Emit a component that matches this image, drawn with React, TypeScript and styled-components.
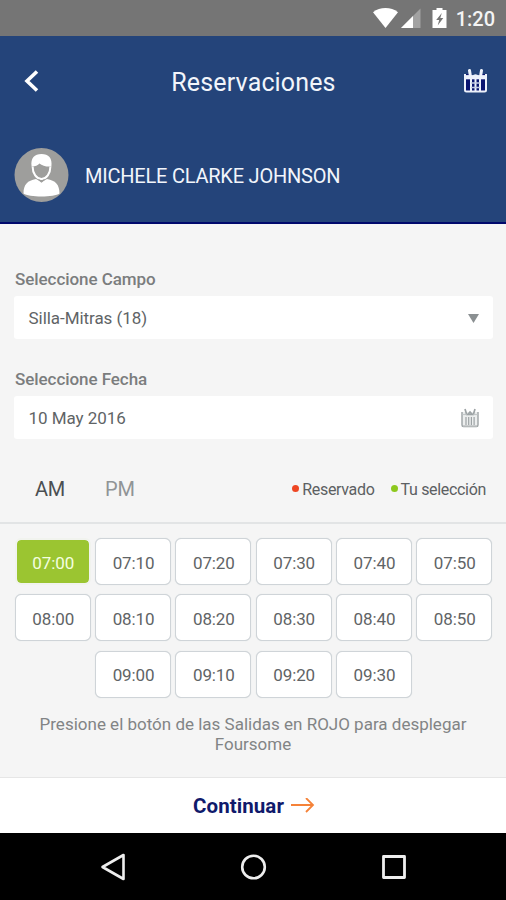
import React from "react";
import styled, { createGlobalStyle } from "styled-components";

const GlobalStyle = createGlobalStyle`
  * { box-sizing: border-box; }
  body { margin: 0; background: #f5f5f5; }
  svg { display: block; flex: none; }
  button { font: inherit; color: inherit; border: 0; background: none; padding: 0; margin: 0; }
`;

const Screen = styled.div`
  width: 506px;
  height: 900px;
  display: flex;
  flex-direction: column;
  overflow: hidden;
  background: #f5f5f5;
  color: #5c6062;
  font-family: Roboto, "Liberation Sans", sans-serif;
  font-size: 17px;
`;

const StatusBar = styled.div`
  height: 36px;
  flex: none;
  display: flex;
  align-items: center;
  justify-content: flex-end;
  padding-right: 11px;
  background: #757575;
  color: #f4f4f4;
`;

const Clock = styled.span`
  margin-left: 8px;
  font-size: 20px;
  font-weight: 500;
  line-height: 36px;
  padding-top: 2px;
`;

const Header = styled.header`
  height: 188px;
  flex: none;
  background: #24447a;
  border-bottom: 2px solid #00086c;
  color: #f2f5fb;
`;

const TitleBar = styled.div`
  height: 90px;
  display: grid;
  grid-template-columns: 60px 1fr 60px;
  align-items: center;
  padding: 0 18px 0 23px;
`;

const Title = styled.h1`
  margin: 2px 0 0;
  font-size: 25px;
  font-weight: 400;
  letter-spacing: 0.15px;
  text-align: center;
  padding-right: 4px;
`;

const IconButton = styled.button<{ $end?: boolean }>`
  display: flex;
  justify-content: ${(p) => (p.$end ? "flex-end" : "flex-start")};
`;

const Profile = styled.div`
  height: 98px;
  display: flex;
  align-items: center;
  gap: 16px;
  padding: 0 14px;
`;

const ProfileName = styled.span`
  font-size: 20px;
  letter-spacing: -0.22px;
  padding-top: 2px;
`;

const Form = styled.section`
  height: 215px;
  flex: none;
  padding: 43px 13px 0 14px;
`;

const Field = styled.div`
  height: 100px;
`;

const FieldLabel = styled.div`
  height: 29px;
  line-height: 24px;
  padding-left: 1px;
  font-size: 17px;
  font-weight: 500;
  letter-spacing: -0.06px;
  color: #7b7d7e;
`;

const FieldBox = styled.div`
  height: 43px;
  display: flex;
  align-items: center;
  justify-content: space-between;
  padding: 1px 14px 0 14.5px;
  border-radius: 3px;
  background: #fff;
  letter-spacing: -0.05px;
  color: #5f6466;
`;

const Periods = styled.div`
  height: 85px;
  flex: none;
  display: flex;
  align-items: center;
  border-bottom: 2px solid #e2e4e5;
  padding: 16px 20px 0 35px;
`;

const Period = styled.button<{ $active?: boolean }>`
  width: 70px;
  text-align: left;
  font-size: 20px;
  letter-spacing: -0.2px;
  color: ${(p) => (p.$active ? "#4b4f52" : "#909496")};
`;

const Legend = styled.div`
  margin-left: auto;
  display: flex;
  gap: 16px;
  font-size: 16px;
`;

const LegendItem = styled.span<{ $color: string }>`
  display: flex;
  align-items: center;
  gap: 3px;
  letter-spacing: -0.32px;
  padding-top: 1px;
  &::before {
    content: "";
    width: 7px;
    height: 7px;
    margin-bottom: 2px;
    border-radius: 50%;
    background: ${(p) => p.$color};
  }
`;

const Slots = styled.div`
  height: 160px;
  margin-top: 14px;
  flex: none;
  display: flex;
  flex-wrap: wrap;
  align-content: flex-start;
  justify-content: center;
  gap: 9.3px 4.3px;
  padding: 0 9px 0 10px;
`;

const Slot = styled.button<{ $selected?: boolean }>`
  width: 76px;
  height: 47px;
  border-radius: 6px;
  border: ${(p) => (p.$selected ? "2px solid #f1f3ee" : "1.5px solid #cfd4d8")};
  box-shadow: 0 0 1px ${(p) => (p.$selected ? "transparent" : "#d5dadd")};
  background: ${(p) => (p.$selected ? "#9bc531" : "#fff")};
  background-clip: padding-box;
  color: ${(p) => (p.$selected ? "#f4ffe0" : "#5f6466")};
  font-size: 17px;
  letter-spacing: -0.1px;
  padding: 2px 0 0 1px;
`;

const Hint = styled.p`
  margin: 0;
  height: 79px;
  flex: none;
  padding: 16px 30px 0;
  text-align: center;
  font-size: 17px;
  line-height: 20px;
  color: #828485;
`;

const Continue = styled.button`
  height: 56px;
  flex: none;
  display: flex;
  align-items: center;
  justify-content: center;
  gap: 7px;
  background: #fff;
  border-top: 1px solid #e6e6e6;
  color: #101a6b;
  font-size: 20.5px;
  font-weight: 700;
  letter-spacing: 0.08px;
  padding-left: 2px;
`;

const NavBar = styled.nav`
  flex: 1;
  display: flex;
  align-items: center;
  justify-content: space-between;
  padding: 1px 97px 0 99px;
  background: #000;
`;

const CalendarIcon = () => (
  <svg width="25" height="25" viewBox="0 0 25 25" fill="none" stroke="#eef2fb">
    <path d="M2 5v16q0 1.500 1.500 1.500h18q1.500 0 1.500-1.500V5" fill="#0a1470" strokeWidth="2" />
    <path d="M9 2.500h7v4h-7z" fill="#24447a" stroke="none" />
    <path d="M2.500 8.200h20" strokeWidth="4.200" />
    <path d="M9 7.500q3.500-4.500 7 0z" fill="#eef2fb" stroke="none" />
    <path d="M6.500 1.500l1 6M18.500 1.500l-1 6" strokeWidth="3" strokeLinecap="round" />
    <path d="M8 10v12.500M12.500 10v12.500M17 10v12.500" strokeWidth="2" />
    <path d="M8 14h9M8 18.500h9" strokeWidth="1.600" stroke="#c3cbe4" />
  </svg>
);

const FieldCalendarIcon = () => (
  <svg width="18" height="20" viewBox="0 0 18 20" fill="none" stroke="#9da3a5">
    <path d="M1 4v13q0 1.500 1.500 1.500h13q1.500 0 1.500-1.500V4" fill="#eceeee" strokeWidth="1.400" />
    <path d="M1.500 6.500h15" strokeWidth="1.200" stroke="#c3c7c8" />
    <path d="M4 1l1.500 5M14 1l-1.500 5M6.800 6.500l2.200-2.500 2.200 2.500z" strokeWidth="1.700" />
    <path d="M5 9v8M7.700 9v8M10.400 9v8M13.100 9v8" strokeWidth="1.200" />
    <path d="M2 17.800h14" strokeWidth="1.500" stroke="#c9cccd" />
  </svg>
);

const StatusIcons = () => (
  <svg width="76" height="22" viewBox="0 0 76 22">
    <path d="M1 5.300C8 -0.300 19 -0.300 26 5.300L13.500 21z" fill="#fff" />
    <path d="M48.500 1.500V21H29z" fill="#a2a2a2" />
    <path d="M41 9V21H29z" fill="#fff" />
    <path d="M64.500 1h6v2h4v18h-14V3h4z" fill="#fff" />
    <path d="M69.800 6l-5.600 7h3l-1.500 5.500 5.600-7.500h-3z" fill="#757575" />
  </svg>
);

const Avatar = () => (
  <svg width="55" height="55" viewBox="0 0 55 55">
    <circle cx="27.500" cy="27" r="27" fill="#9e9e9c" />
    <path d="M9.500 45.500c0-9 4-13 12.500-14.500l5.500 3 5.500-3c8.500 1.500 12.500 5.500 12.500 14.500-5 4-31 4-36 0z" fill="#fff" />
    <path d="M18.600 18.500c0 7 4 12.500 8.900 12.500s8.900-5.500 8.900-12.500" fill="#9e9e9c" stroke="#fff" strokeWidth="2" />
    <path d="M17.600 18.500C16.500 10 20.500 6 27.500 6s11 4 9.900 12.500c-5 .5-9-.7-12-3-1.500 2-4 3-7.800 3z" fill="#fff" />
    <path d="M24.500 31.500l3 2.500 3-2.500" fill="none" stroke="#9e9e9c" strokeWidth="1.200" />
  </svg>
);

const slots = [
  "07:00", "07:10", "07:20", "07:30", "07:40", "07:50",
  "08:00", "08:10", "08:20", "08:30", "08:40", "08:50",
  "09:00", "09:10", "09:20", "09:30",
];

export default function App() {
  return (
    <Screen>
      <GlobalStyle />
      <StatusBar>
        <StatusIcons />
        <Clock>1:20</Clock>
      </StatusBar>
      <Header>
        <TitleBar>
          <IconButton aria-label="Atrás">
            <svg width="16" height="24" viewBox="0 0 16 24" fill="none" stroke="#fff" strokeWidth="3.600">
              <path d="M14 2.500L4 12l10 9.500" />
            </svg>
          </IconButton>
          <Title>Reservaciones</Title>
          <IconButton $end aria-label="Calendario">
            <CalendarIcon />
          </IconButton>
        </TitleBar>
        <Profile>
          <Avatar />
          <ProfileName>MICHELE CLARKE JOHNSON</ProfileName>
        </Profile>
      </Header>
      <Form>
        <Field>
          <FieldLabel>Seleccione Campo</FieldLabel>
          <FieldBox>
            Silla-Mitras (18)
            <svg width="11" height="9" viewBox="0 0 11 9">
              <path d="M0 0h11L5.500 9z" fill="#8b9092" />
            </svg>
          </FieldBox>
        </Field>
        <Field>
          <FieldLabel>Seleccione Fecha</FieldLabel>
          <FieldBox>
            10 May 2016
            <FieldCalendarIcon />
          </FieldBox>
        </Field>
      </Form>
      <Periods>
        <Period $active>AM</Period>
        <Period>PM</Period>
        <Legend>
          <LegendItem $color="#ee4623">Reservado</LegendItem>
          <LegendItem $color="#8dc81e">Tu selección</LegendItem>
        </Legend>
      </Periods>
      <Slots>
        {slots.map((time, i) => (
          <Slot key={time} $selected={i === 0}>{time}</Slot>
        ))}
      </Slots>
      <Hint>Presione el botón de las Salidas en ROJO para desplegar Foursome</Hint>
      <Continue>
        Continuar
        <svg width="24" height="16" viewBox="0 0 24 16" fill="none" stroke="#f58238" strokeWidth="1.800">
          <path d="M0 7h22M15 0l7 7-7 7" />
        </svg>
      </Continue>
      <NavBar>
        <svg width="30" height="30" viewBox="0 0 30 30" fill="none" stroke="#eee" strokeWidth="2.600" strokeLinejoin="round">
          <path d="M24.500 3v24L3.500 15z" />
        </svg>
        <svg width="30" height="30" viewBox="0 0 30 30" fill="none" stroke="#eee" strokeWidth="2.600">
          <circle cx="14.500" cy="15" r="11.300" />
        </svg>
        <svg width="30" height="30" viewBox="0 0 30 30" fill="none" stroke="#eee" strokeWidth="2.800" strokeLinejoin="round">
          <path d="M4.500 4.500h21v21h-21z" />
        </svg>
      </NavBar>
    </Screen>
  );
}
